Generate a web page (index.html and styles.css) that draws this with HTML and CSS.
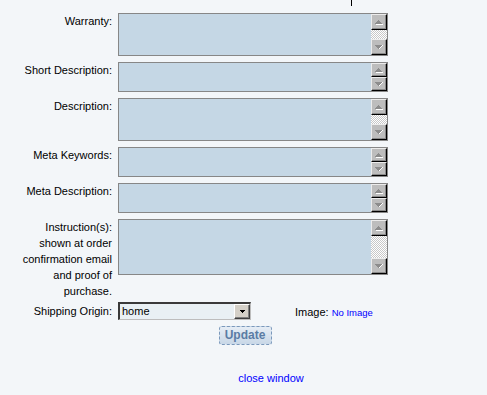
FILE: index.html
```html
<!DOCTYPE html>
<html>
<head>
<meta charset="utf-8">
<link rel="stylesheet" href="styles.css">
</head>
<body>
<div class="top"><span class="tick"></span></div>

<form class="form">
  <div class="label">Warranty:</div>
  <div class="ta tall">
    <div class="ta-body"></div>
    <div class="sb">
      <div class="btn"><svg width="8" height="5" viewBox="0 0 8 5"><path d="M3 0h1v1h-1zM2 1h3v1h-3zM1 2h5v1h-5zM0 3h7v1h-7z" fill="#8c8c8c"/><path d="M1 4h7v1h-7z" fill="#fff"/></svg></div>
      <div class="track"></div>
      <div class="btn"><svg width="8" height="5" viewBox="0 0 8 5"><path d="M0 0h7v1h-7zM1 1h5v1h-5zM2 2h3v1h-3zM3 3h1v1h-1z" fill="#8c8c8c"/><path d="M7 0h1v1h-1zM6 1h1v1h-1zM5 2h1v1h-1zM4 3h1v1h-1z" fill="#fff"/></svg></div>
    </div>
  </div>

  <div class="label">Short Description:</div>
  <div class="ta short">
    <div class="ta-body"></div>
    <div class="sb">
      <div class="btn"><svg width="8" height="5" viewBox="0 0 8 5"><path d="M3 0h1v1h-1zM2 1h3v1h-3zM1 2h5v1h-5zM0 3h7v1h-7z" fill="#8c8c8c"/><path d="M1 4h7v1h-7z" fill="#fff"/></svg></div>
      <div class="btn"><svg width="8" height="5" viewBox="0 0 8 5"><path d="M0 0h7v1h-7zM1 1h5v1h-5zM2 2h3v1h-3zM3 3h1v1h-1z" fill="#8c8c8c"/><path d="M7 0h1v1h-1zM6 1h1v1h-1zM5 2h1v1h-1zM4 3h1v1h-1z" fill="#fff"/></svg></div>
    </div>
  </div>

  <div class="label">Description:</div>
  <div class="ta tall">
    <div class="ta-body"></div>
    <div class="sb">
      <div class="btn"><svg width="8" height="5" viewBox="0 0 8 5"><path d="M3 0h1v1h-1zM2 1h3v1h-3zM1 2h5v1h-5zM0 3h7v1h-7z" fill="#8c8c8c"/><path d="M1 4h7v1h-7z" fill="#fff"/></svg></div>
      <div class="track"></div>
      <div class="btn"><svg width="8" height="5" viewBox="0 0 8 5"><path d="M0 0h7v1h-7zM1 1h5v1h-5zM2 2h3v1h-3zM3 3h1v1h-1z" fill="#8c8c8c"/><path d="M7 0h1v1h-1zM6 1h1v1h-1zM5 2h1v1h-1zM4 3h1v1h-1z" fill="#fff"/></svg></div>
    </div>
  </div>

  <div class="label">Meta Keywords:</div>
  <div class="ta short">
    <div class="ta-body"></div>
    <div class="sb">
      <div class="btn"><svg width="8" height="5" viewBox="0 0 8 5"><path d="M3 0h1v1h-1zM2 1h3v1h-3zM1 2h5v1h-5zM0 3h7v1h-7z" fill="#8c8c8c"/><path d="M1 4h7v1h-7z" fill="#fff"/></svg></div>
      <div class="btn"><svg width="8" height="5" viewBox="0 0 8 5"><path d="M0 0h7v1h-7zM1 1h5v1h-5zM2 2h3v1h-3zM3 3h1v1h-1z" fill="#8c8c8c"/><path d="M7 0h1v1h-1zM6 1h1v1h-1zM5 2h1v1h-1zM4 3h1v1h-1z" fill="#fff"/></svg></div>
    </div>
  </div>

  <div class="label">Meta Description:</div>
  <div class="ta short">
    <div class="ta-body"></div>
    <div class="sb">
      <div class="btn"><svg width="8" height="5" viewBox="0 0 8 5"><path d="M3 0h1v1h-1zM2 1h3v1h-3zM1 2h5v1h-5zM0 3h7v1h-7z" fill="#8c8c8c"/><path d="M1 4h7v1h-7z" fill="#fff"/></svg></div>
      <div class="btn"><svg width="8" height="5" viewBox="0 0 8 5"><path d="M0 0h7v1h-7zM1 1h5v1h-5zM2 2h3v1h-3zM3 3h1v1h-1z" fill="#8c8c8c"/><path d="M7 0h1v1h-1zM6 1h1v1h-1zM5 2h1v1h-1zM4 3h1v1h-1z" fill="#fff"/></svg></div>
    </div>
  </div>

  <div class="label multi">Instruction(s):<br>shown at order<br>confirmation email<br>and proof of<br>purchase.</div>
  <div class="ta large">
    <div class="ta-body"></div>
    <div class="sb">
      <div class="btn"><svg width="8" height="5" viewBox="0 0 8 5"><path d="M3 0h1v1h-1zM2 1h3v1h-3zM1 2h5v1h-5zM0 3h7v1h-7z" fill="#8c8c8c"/><path d="M1 4h7v1h-7z" fill="#fff"/></svg></div>
      <div class="track"></div>
      <div class="btn"><svg width="8" height="5" viewBox="0 0 8 5"><path d="M0 0h7v1h-7zM1 1h5v1h-5zM2 2h3v1h-3zM3 3h1v1h-1z" fill="#8c8c8c"/><path d="M7 0h1v1h-1zM6 1h1v1h-1zM5 2h1v1h-1zM4 3h1v1h-1z" fill="#fff"/></svg></div>
    </div>
  </div>

  <div class="label ship">Shipping Origin:</div>
  <div class="ship-row">
    <div class="select">
      <span class="sel-text">home</span>
      <span class="sel-btn"><svg width="5" height="3" viewBox="0 0 5 3"><path d="M0 0h5v1h-5zM1 1h3v1h-3zM2 2h1v1h-1z" fill="#000"/></svg></span>
    </div>
    <span class="image">Image: <a href="#" class="noimg">No Image</a></span>
  </div>
</form>

<div class="actions"><button type="button" class="update">Update</button></div>
<div class="close"><a href="#">close window</a></div>
</body>
</html>
```

FILE: styles.css
```css
html, body {
  margin: 0;
  padding: 0;
}
body {
  background: #f3f6f9;
  font-family: "Liberation Sans", Arial, sans-serif;
  font-size: 11px;
  line-height: 16px;
  color: #000;
  width: 487px;
  height: 395px;
  overflow: hidden;
}
.top {
  height: 6px;
}
.tick {
  display: block;
  width: 1px;
  height: 6px;
  background: #000;
  margin-left: 351px;
}
.form {
  display: grid;
  grid-template-columns: 92px 270px;
  column-gap: 6px;
  row-gap: 6px;
  padding-left: 20px;
  margin: 7px 0 0;
}
.label {
  text-align: right;
  white-space: nowrap;
}
.label.multi {
  margin-bottom: -3px;
}
.label.ship {
  align-self: center;
}
.ta {
  display: flex;
  box-sizing: border-box;
  border: 1px solid #878787;
  background: #c5d7e5;
  height: 43px;
}
.ta.short { height: 30px; }
.ta.large { height: 56px; }
.ta-body { flex: 1; }
.sb {
  width: 16px;
  display: flex;
  flex-direction: column;
}
.btn {
  box-sizing: border-box;
  height: 16px;
  flex: none;
  background: #bdbdbd;
  border-top: 1px solid #ececec;
  border-left: 1px solid #ececec;
  border-right: 1px solid #000;
  border-bottom: 1px solid #000;
  box-shadow: inset -1px -1px 0 #8a8a8a;
  display: flex;
  align-items: center;
  justify-content: center;
}
.btn svg { display: block; }
.ta.short .btn { height: 14px; }
.track {
  flex: 1;
  background-color: #fff;
  background-image: conic-gradient(#c8c8c8 25%, #fff 0 50%, #c8c8c8 0 75%, #fff 0);
  background-size: 2px 2px;
}
.ship-row {
  display: flex;
  align-items: center;
  height: 18px;
}
.select {
  display: flex;
  align-items: stretch;
  box-sizing: border-box;
  width: 133px;
  height: 18px;
  background: #e9f0f4;
  border-top: 2px solid #3a3a3a;
  border-left: 2px solid #3a3a3a;
  border-right: 1px solid #bdbdbd;
  border-bottom: 1px solid #bdbdbd;
}
.sel-text {
  flex: 1;
  font-size: 11px;
  line-height: 15px;
  padding-left: 2px;
}
.sel-btn {
  box-sizing: border-box;
  width: 16px;
  background: #d4d0c8;
  border-top: 1px solid #fff;
  border-left: 1px solid #fff;
  border-right: 1px solid #404040;
  border-bottom: 1px solid #404040;
  box-shadow: inset -1px -1px 0 #808080;
  display: flex;
  align-items: center;
  justify-content: center;
}
.image {
  margin-left: 44px;
  padding-top: 3px;
}
.noimg {
  color: #0000ff;
  text-decoration: none;
  font-size: 9.5px;
}
.actions {
  display: flex;
  justify-content: center;
  padding-left: 3px;
  margin-top: 6px;
}
.update {
  box-sizing: border-box;
  width: 53px;
  height: 19px;
  padding: 0;
  border: 1px dashed #7a98bb;
  border-radius: 3px;
  background: linear-gradient(#e6edf5, #c8d7e7);
  color: #5a7ca4;
  font-family: "Liberation Sans", Arial, sans-serif;
  font-weight: bold;
  font-size: 12px;
  line-height: 17px;
}
.close {
  display: flex;
  justify-content: center;
  padding-left: 55px;
  margin-top: 25px;
}
.close a {
  color: #0000ff;
  text-decoration: none;
  font-size: 11px;
}
```
